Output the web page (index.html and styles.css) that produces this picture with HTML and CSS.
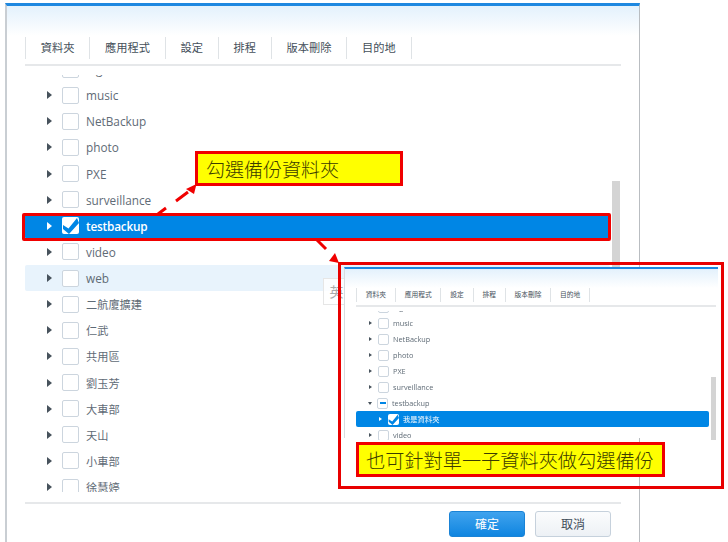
FILE: index.html
```html
<!DOCTYPE html>
<html lang="zh-Hant">
<head>
<meta charset="utf-8">
<title>備份資料夾</title>
<link rel="stylesheet" href="styles.css">
</head>
<body>
<div class="page">
  <section class="dialog">
    <div class="dialog-head"></div>
    <nav class="tabs">
      <span class="tab">資料夾</span><span class="tab">應用程式</span><span class="tab">設定</span><span class="tab">排程</span><span class="tab">版本刪除</span><span class="tab">目的地</span>
    </nav>
    <div class="tree">
      <div class="tree-rows">
        <div class="row"><i class="arrow"></i><i class="check"></i><span>log</span></div>
        <div class="row"><i class="arrow"></i><i class="check"></i><span>music</span></div>
        <div class="row"><i class="arrow"></i><i class="check"></i><span>NetBackup</span></div>
        <div class="row"><i class="arrow"></i><i class="check"></i><span>photo</span></div>
        <div class="row"><i class="arrow"></i><i class="check"></i><span>PXE</span></div>
        <div class="row"><i class="arrow"></i><i class="check"></i><span>surveillance</span></div>
        <div class="row selected"><i class="arrow"></i><i class="check on"><svg viewBox="0 0 17 17"><path d="M1 8 6.500 11.500 15 1 17 6 7 17 1 12Z"/></svg></i><span>testbackup</span></div>
        <div class="row"><i class="arrow"></i><i class="check"></i><span>video</span></div>
        <div class="row hover"><i class="arrow"></i><i class="check"></i><span>web</span></div>
        <div class="row"><i class="arrow"></i><i class="check"></i><span class="cjk">二航廈擴建</span></div>
        <div class="row"><i class="arrow"></i><i class="check"></i><span class="cjk">仁武</span></div>
        <div class="row"><i class="arrow"></i><i class="check"></i><span class="cjk">共用區</span></div>
        <div class="row"><i class="arrow"></i><i class="check"></i><span class="cjk">劉玉芳</span></div>
        <div class="row"><i class="arrow"></i><i class="check"></i><span class="cjk">大車部</span></div>
        <div class="row"><i class="arrow"></i><i class="check"></i><span class="cjk">天山</span></div>
        <div class="row"><i class="arrow"></i><i class="check"></i><span class="cjk">小車部</span></div>
        <div class="row"><i class="arrow"></i><i class="check"></i><span class="cjk">徐慧婷</span></div>
      </div>
      <div class="scrollbar"></div>
    </div>
    <footer class="dialog-foot">
      <button class="btn primary">確定</button>
      <button class="btn">取消</button>
    </footer>
  </section>

  <div class="ime">英</div>

  <div class="row-outline"></div>
  <div class="callout callout-a">勾選備份資料夾</div>

  <svg class="arrows" viewBox="0 0 728 542">
    <path class="dash" d="M158 214 166 208M176 201 188 192"/>
    <path class="head" d="M196.500 184 186 189 194 194Z"/>
    <path class="dash" d="M317 240 326 249"/>
    <path class="head" d="M339 263 329 261 335 253Z"/>
  </svg>

  <aside class="inset">
    <section class="dialog mini">
      <div class="dialog-head"></div>
      <nav class="tabs">
        <span class="tab">資料夾</span><span class="tab">應用程式</span><span class="tab">設定</span><span class="tab">排程</span><span class="tab">版本刪除</span><span class="tab">目的地</span>
      </nav>
      <div class="tree">
        <div class="tree-rows">
          <div class="row"><i class="arrow"></i><i class="check"></i><span>log</span></div>
          <div class="row"><i class="arrow"></i><i class="check"></i><span>music</span></div>
          <div class="row"><i class="arrow"></i><i class="check"></i><span>NetBackup</span></div>
          <div class="row"><i class="arrow"></i><i class="check"></i><span>photo</span></div>
          <div class="row"><i class="arrow"></i><i class="check"></i><span>PXE</span></div>
          <div class="row"><i class="arrow"></i><i class="check"></i><span>surveillance</span></div>
          <div class="row"><i class="arrow open"></i><i class="check part"></i><span>testbackup</span></div>
          <div class="row selected child"><i class="arrow"></i><i class="check on"><svg viewBox="0 0 17 17"><path d="M1 8 6.500 11.500 15 1 17 6 7 17 1 12Z"/></svg></i><span>我是資料夾</span></div>
          <div class="row"><i class="arrow"></i><i class="check"></i><span>video</span></div>
        </div>
        <div class="scrollbar"></div>
      </div>
    </section>
    <div class="callout callout-b">也可針對單一子資料夾做勾選備份</div>
  </aside>
</div>
</body>
</html>
```

FILE: styles.css
```css
* { box-sizing: border-box; }
html, body { margin: 0; background: #fff; overflow: hidden; }
.page {
  position: relative;
  width: 728px;
  height: 542px;
  overflow: hidden;
  font-family: "Open Sans", "Noto Sans CJK TC", sans-serif;
  filter: blur(0.35px);
}

/* dialog */
.dialog {
  margin: 3px 0 0 5px;
  width: 635px;
  height: 539px;
  display: flex;
  flex-direction: column;
  border-top: 3px solid #1e88e0;
  border-left: 2px solid #c9ced3;
  border-right: 1px solid #b9bdc1;
  background: #fff;
}
.dialog-head {
  height: 30px;
  flex: none;
  background: linear-gradient(#e3f1fc, #fff);
}
.tabs {
  display: flex;
  align-items: center;
  flex: none;
  height: 30px;
  margin: 0 18px;
  padding-bottom: 5px;
  border-bottom: 2px solid #e6e8ea;
}
.tab {
  height: 22px;
  line-height: 22px;
  padding: 0 14.75px;
  font-size: 11.25px;
  color: #444f5a;
  border-right: 1px solid #dfe3e6;
  white-space: nowrap;
}
.tab:first-child { border-left: 1px solid #dfe3e6; }

/* tree */
.tree {
  position: relative;
  flex: none;
  height: 417px;
  margin-top: 9px;
  overflow: hidden;
}
.tree-rows { margin: -19px 0 0 18px; }
.row {
  display: flex;
  align-items: center;
  height: 26.13px;
  width: 585px;
  padding-left: 22px;
  font-size: 11.8px;
  color: #5f6b76;
  border-radius: 2px;
  white-space: nowrap;
}
.cjk { font-size: 11.2px; }
.arrow {
  flex: none;
  width: 0;
  height: 0;
  margin-right: 10px;
  border-style: solid;
  border-width: 4px 0 4px 5px;
  border-color: transparent transparent transparent #47525c;
}
.check {
  flex: none;
  width: 17px;
  height: 17px;
  margin-right: 7px;
  border: 1px solid #ccd5de;
  border-radius: 2px;
  background: #fff;
}
.check.on { border: 0; overflow: hidden; }
.check.on svg { display: block; width: 100%; height: 100%; fill: #0086e5; }
.row.selected { background: #0086e5; color: #fff; font-weight: 600; letter-spacing: -0.2px; }
.row.selected .arrow { border-left-color: #fff; }
.row.hover { background: #e8f3fc; }
.scrollbar {
  position: absolute;
  left: 605px;
  top: 106px;
  width: 8px;
  height: 150px;
  background: #d4d4d4;
}

.dialog-foot {
  display: flex;
  justify-content: flex-end;
  gap: 10px;
  flex: none;
  margin: 10px 18px 0;
  padding: 7px 10px 0 0;
  border-top: 2px solid #e6e8ea;
}
.btn {
  width: 76px;
  height: 26px;
  padding: 0;
  font: 12px "Open Sans", "Noto Sans CJK TC", sans-serif;
  color: #3f4c58;
  background: linear-gradient(#fbfcfd, #edf1f5);
  border: 1px solid #c6d1dc;
  border-radius: 3px;
}
.btn.primary {
  color: #fff;
  background: linear-gradient(#40a3ee, #0f85e0);
  border-color: #1a83d6;
}

/* overlays */
.ime {
  position: absolute;
  left: 323px;
  top: 278px;
  width: 27px;
  height: 27px;
  line-height: 25px;
  text-align: center;
  font-size: 14px;
  color: #aaa;
  border: 1px solid #e6e6e6;
  background: rgba(255, 255, 255, 0.8);
}
.row-outline {
  position: absolute;
  left: 22px;
  top: 213px;
  width: 589px;
  height: 28px;
  border: 3px solid #f00000;
  border-radius: 2px;
}
.callout {
  position: absolute;
  display: flex;
  align-items: center;
  height: 35px;
  background: #ff0;
  border: 3px solid #f00000;
  font-family: "Noto Sans CJK TC", sans-serif;
  font-weight: 300;
  font-size: 19px;
  color: #3c3c00;
  white-space: nowrap;
}
.callout-a { left: 195px; top: 151px; width: 208px; padding-left: 8px; }
.callout-b { left: 15px; top: 177px; width: 309px; padding-left: 7px; font-size: 19.2px; }

.arrows { position: absolute; left: 0; top: 0; width: 728px; height: 542px; }
.dash { fill: none; stroke: #f00000; stroke-width: 3; }
.head { fill: #f00000; }

/* inset */
.inset {
  position: absolute;
  left: 338px;
  top: 262px;
  width: 386px;
  height: 227px;
  border: 3px solid #e80000;
}
.dialog.mini {
  width: 374px;
  height: 171px;
  margin: 2px 0 0 3px;
  border-top-width: 2px;
  border-left: 1px solid #d8dcdf;
  border-right: 0;
}
.mini .dialog-head { height: 19px; }
.mini .tabs { height: 19px; margin: 0 2px 0 11px; padding-bottom: 3px; }
.mini .tab { height: 14px; line-height: 14px; font-size: 6.75px; padding: 0 8.8px; }
.mini .tree { height: 129px; margin-top: 4px; overflow: hidden; }
.mini .tree-rows { margin: -12px 0 0 11px; }
.mini .row { height: 16px; width: 353px; padding-left: 13px; font-size: 7.3px; }
.mini .arrow { margin-right: 6px; border-width: 2.5px 0 2.500px 3px; }
.mini .check { width: 11px; height: 11px; margin-right: 4px; }
.mini .row.child { padding-left: 23px; font-weight: 400; letter-spacing: 0; }
.mini .arrow.open { border-width: 3px 2.500px 0; border-color: #47525c transparent transparent; margin-right: 5px; margin-left: -1px; }
.check.part { position: relative; }
.check.part::after {
  content: "";
  position: absolute;
  left: 1.500px;
  top: 3.500px;
  width: 6px;
  height: 2px;
  background: #0086e5;
}
.mini .scrollbar { left: 366px; top: 66px; width: 5px; height: 63px; }
```
